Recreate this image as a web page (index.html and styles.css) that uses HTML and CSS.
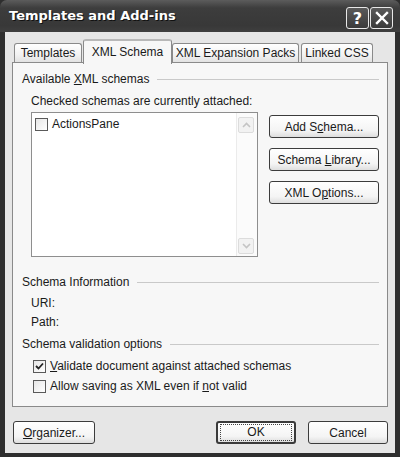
FILE: index.html
```html
<!DOCTYPE html>
<html>
<head>
    <meta charset="UTF-8" />
    <title>Templates and Add-ins</title>
    <link rel="stylesheet" href="styles.css">
</head>
<body>
    <div class="window">
        <div class="titlebar">
            <span class="title">Templates and Add-ins</span>
            <div class="caption-btns">
                <div class="cap-btn">?</div>
                <div class="cap-btn">
                    <svg width="14" height="14" viewBox="0 0 14 14">
                        <path d="M2 2 L12 12 M12 2 L2 12" stroke="#fff" stroke-width="2.4" stroke-linecap="square"/>
                    </svg>
                </div>
            </div>
        </div>
        <div class="client">
            <div class="tabs">
                <div class="tab tab-templates">Templates</div>
                <div class="tab tab-active">XML Schema</div>
                <div class="tab tab-packs">XML Expansion Packs</div>
                <div class="tab tab-css">Linked CSS</div>
            </div>
            <div class="panel">
                <div class="group">
                    <span>Available <u>X</u>ML schemas</span>
                    <div class="group-line"></div>
                </div>
                <div class="hint">Checked schemas are currently attached:</div>
                <div class="schema-row">
                    <div class="listbox">
                        <div class="list-items">
                            <div class="list-item">
                                <div class="check"></div>
                                <span>ActionsPane</span>
                            </div>
                        </div>
                        <div class="scrollbar">
                            <div class="arrow">
                                <svg width="9" height="6" viewBox="0 0 9 6"><path d="M1 5 L4.5 1.5 L8 5" fill="none" stroke="#c4c4c4" stroke-width="1.6"/></svg>
                            </div>
                            <div class="arrow">
                                <svg width="9" height="6" viewBox="0 0 9 6"><path d="M1 1 L4.5 4.5 L8 1" fill="none" stroke="#c4c4c4" stroke-width="1.6"/></svg>
                            </div>
                        </div>
                    </div>
                    <div class="side-btns">
                        <div class="btn"><span>Add S<u>c</u>hema...</span></div>
                        <div class="btn"><span>Schema <u>L</u>ibrary...</span></div>
                        <div class="btn"><span>XML O<u>p</u>tions...</span></div>
                    </div>
                </div>

                <div class="group group-info">
                    <span>Schema Information</span>
                    <div class="group-line"></div>
                </div>
                <div class="info info-uri">URI:</div>
                <div class="info info-path">Path:</div>

                <div class="group group-valid">
                    <span>Schema validation options</span>
                    <div class="group-line"></div>
                </div>
                <div class="option option-first">
                    <div class="check">
                        <svg width="11" height="11" viewBox="0 0 11 11"><path d="M2 5 L4.5 7.5 L9 2.5" fill="none" stroke="#222" stroke-width="1.8"/></svg>
                    </div>
                    <span><u>V</u>alidate document against attached schemas</span>
                </div>
                <div class="option">
                    <div class="check"></div>
                    <span>Allow saving as XML even if <u>n</u>ot valid</span>
                </div>
            </div>
            <div class="footer">
                <div class="btn btn-organizer"><span><u>O</u>rganizer...</span></div>
                <div class="footer-right">
                    <div class="btn btn-default"><span class="focus">OK</span></div>
                    <div class="btn btn-cancel"><span>Cancel</span></div>
                </div>
            </div>
        </div>
    </div>
</body>
</html>
```

FILE: styles.css
```css
body {
    margin: 0;
    font-family: "Liberation Sans", Arial, sans-serif;
    font-size: 12px;
    color: #1a1a1a;
}
.window {
    width: 400px;
    height: 457px;
    background-color: #2e2e2e;
    display: flex;
    flex-direction: column;
}
.titlebar {
    height: 32px;
    display: flex;
    align-items: center;
    justify-content: space-between;
    padding: 0 7px 0 9px;
    background: linear-gradient(#5c5c5c, #3d3d3d 25%, #383838 80%, #3f3f3f);
    border-radius: 7px 7px 0 0;
}
.title {
    font-family: "DejaVu Sans", sans-serif;
    font-weight: bold;
    font-size: 13px;
    color: #fff;
    text-shadow: 1px 1px 0 #111;
    margin-top: -1px;
}
.caption-btns {
    display: flex;
    gap: 1px;
    margin-top: 4px;
}
.cap-btn {
    width: 21px;
    height: 20px;
    border: 1px solid #e8e8e8;
    border-radius: 3px;
    background: linear-gradient(#5a5a5a, #3a3a3a);
    color: #fff;
    font-family: "DejaVu Sans", sans-serif;
    font-weight: bold;
    font-size: 16px;
    display: flex;
    align-items: center;
    justify-content: center;
}
.client {
    flex: 1;
    margin: 0 5px 4px 5px;
    background-color: #e6e6e6;
    padding: 7px 7px 0 7px;
}
.tabs {
    display: flex;
    height: 23px;
    padding-left: 2px;
}
.tab {
    height: 19px;
    margin-top: 4px;
    box-sizing: border-box;
    border: 1px solid #8a8a8a;
    border-bottom: none;
    border-radius: 3px 3px 0 0;
    background: linear-gradient(#ffffff, #f2f2f2 60%, #e2e2e2);
    text-align: center;
    line-height: 19px;
}
.tab-templates {
    width: 68px;
}
.tab-active {
    width: 89px;
    height: 25px;
    margin-top: 0;
    margin-left: 1px;
    line-height: 22px;
    position: relative;
    z-index: 1;
    background: #f7f7f7;
    border-top: 2px solid #b8b8b8;
}
.tab-packs {
    width: 127px;
}
.tab-css {
    width: 72px;
    margin-left: 2px;
}
.panel {
    height: 334px;
    border: 1px solid #8a8a8a;
    background-color: #f7f7f7;
    padding: 9px 8px 0 9px;
}
.group {
    display: flex;
    align-items: center;
    height: 14px;
    line-height: 14px;
}
.group-line {
    flex: 1;
    height: 1px;
    background-color: #c9c9c9;
    margin-left: 8px;
}
.hint {
    margin: 8px 0 0 9px;
    line-height: 14px;
}
.schema-row {
    display: flex;
    margin: 4px 0 0 9px;
}
.listbox {
    width: 227px;
    height: 145px;
    box-sizing: border-box;
    border: 1px solid #8e8e8e;
    background-color: #fff;
    display: flex;
}
.list-items {
    flex: 1;
    padding: 4px 0 0 3px;
}
.list-item {
    display: flex;
    align-items: center;
    gap: 4px;
    line-height: 14px;
}
.check {
    width: 11px;
    height: 11px;
    border: 1px solid #5a5a5a;
    background: linear-gradient(135deg, #e6e6e6, #ffffff);
    display: flex;
    align-items: center;
    justify-content: center;
}
.scrollbar {
    width: 18px;
    border-left: 1px solid #ebebeb;
    background-color: #fbfbfb;
    display: flex;
    flex-direction: column;
    justify-content: space-between;
    padding: 4px 1px 2px 1px;
}
.arrow {
    width: 14px;
    height: 14px;
    border: 1px solid #dcdcdc;
    border-radius: 2px;
    background-color: #f2f2f2;
    display: flex;
    align-items: center;
    justify-content: center;
}
.side-btns {
    display: flex;
    flex-direction: column;
    gap: 10px;
    margin: 3px 0 0 11px;
}
.btn {
    width: 110px;
    height: 23px;
    box-sizing: border-box;
    border: 1px solid #3c3c3c;
    border-radius: 3px;
    background: linear-gradient(#ffffff, #f4f4f4 70%, #dedede);
    display: flex;
    align-items: center;
    justify-content: center;
}
.group-info {
    margin-top: 18px;
}
.info {
    margin-left: 9px;
    line-height: 14px;
}
.info-uri {
    margin-top: 7px;
}
.info-path {
    margin-top: 5px;
}
.group-valid {
    margin-top: 8px;
}
.option {
    display: flex;
    align-items: center;
    gap: 4px;
    margin: 7px 0 0 11px;
    line-height: 13px;
}
.option-first {
    margin-top: 9px;
}
.footer {
    display: flex;
    justify-content: space-between;
    margin-top: 14px;
}
.footer-right {
    display: flex;
    gap: 12px;
}
.btn-organizer {
    width: 82px;
    margin-left: 1px;
}
.btn-default {
    width: 80px;
    border: 2px solid #3a3a3a;
}
.focus {
    display: block;
    width: 70px;
    height: 15px;
    line-height: 15px;
    text-align: center;
    border: 1px dotted #444;
}
.btn-cancel {
    width: 80px;
}
```
